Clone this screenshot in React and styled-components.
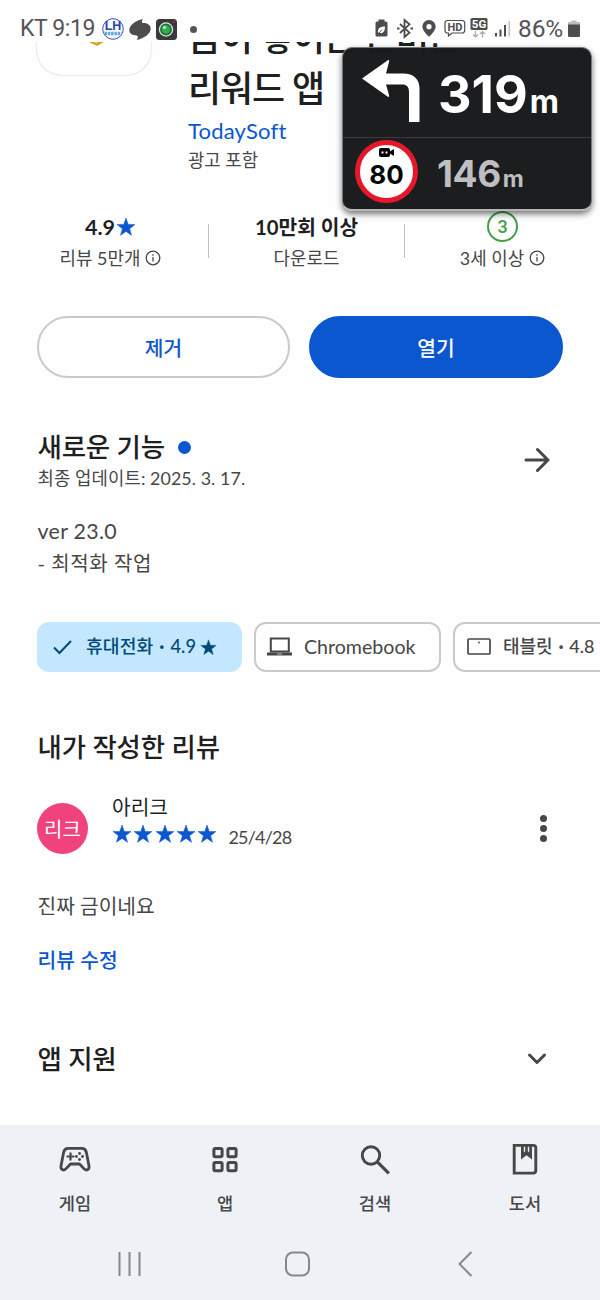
import React from "react"
import styled, { createGlobalStyle } from "styled-components"

const ink = "#1f1f1f"
const grey = "#474747"
const blue = "#0b57cf"

const GlobalStyle = createGlobalStyle`
  * {
    box-sizing: border-box;
  }

  body {
    margin: 0;
    background: #fefefe;
    font-family: Lato, "Noto Sans CJK KR", sans-serif;
    color: ${grey};
  }

  svg {
    display: block;
    flex-shrink: 0;
  }
`

const Screen = styled.div`
  position: relative;
  width: 600px;
  height: 1300px;
  display: flex;
  flex-direction: column;
  overflow: hidden;
  background: #fefefe;
`

const Text = styled.span`
  display: block;
  white-space: nowrap;
  font-size: ${({ $size }) => $size}px;
  line-height: ${({ $line = 30 }) => $line}px;
  font-weight: ${({ $weight = 400 }) => $weight};
  letter-spacing: ${({ $spacing = 0 }) => $spacing}px;
  color: ${({ $color = grey }) => $color};
`

// Status bar

const StatusBar = styled.header`
  flex: none;
  height: 42px;
  padding: 16px 20px 0 20px;
  display: flex;
  justify-content: space-between;
  font-family: Roboto, sans-serif;
`

const StatusGroup = styled.div`
  height: 26px;
  display: flex;
  align-items: center;
  gap: ${({ $gap }) => $gap}px;
`

const LhBadge = () => (
  <svg width="22" height="22" viewBox="0 0 22 22">
    <circle cx="11" cy="11" r="10.3" fill="#f8fbff" stroke="#3a58ad" />
    <text
      x="11"
      y="12"
      textAnchor="middle"
      fontFamily="Liberation Sans"
      fontSize="12.5"
      fontWeight="700"
      fill="#27449c"
    >
      LH
    </text>
    <path d="M2.500 15.500h17" stroke="#65a5dc" strokeWidth="3.500" strokeDasharray="2.500 .8" />
  </svg>
)

const Swirl = () => (
  <svg width="22" height="21" viewBox="0 0 22 21">
    <path
      d="M14 0C12.500 1.800 12.500 3.500 14 4c4.500 0 7.700 2 7.700 5.500 0 5-5.700 9.500-14 11.500 1.500-1.800 1.500-4 0-4.500C3.300 16.500.3 14.500.3 11.300.3 6.300 6 1.800 14 0z"
      fill="#4d4d4f"
    />
  </svg>
)

const Camera = () => (
  <svg width="21" height="21" viewBox="0 0 21 21">
    <rect width="21" height="21" rx="3.500" fill="#37393a" />
    <circle cx="10" cy="10.500" r="7.200" fill="#e3e6e3" />
    <circle cx="10" cy="10.500" r="5.900" fill="#176c35" />
    <circle cx="10" cy="10.500" r="4.400" fill="#35a94e" />
    <circle cx="8.500" cy="8.500" r="1.700" fill="#a6ebaa" />
    <circle cx="18" cy="3" r="1.200" fill="#ad2732" />
  </svg>
)

const Dot = styled.i`
  width: ${({ $size }) => $size}px;
  height: ${({ $size }) => $size}px;
  margin-left: ${({ $left = 0 }) => $left}px;
  border-radius: 50%;
  background: ${({ $color }) => $color};
`

const StatusIcons = () => (
  <svg width="136" height="24" viewBox="0 0 136 24">
    <g fill="#4d4d4f">
      <path d="M3.500 2.500h6v2H11a1.500 1.500 0 0 1 1.500 1.500v12a1.500 1.500 0 0 1-1.500 1.500H2A1.500 1.500 0 0 1 .500 18V6A1.500 1.500 0 0 1 2 4.500h1.500z" />
      <path d="M54 3a6.700 6.700 0 0 1 6.700 6.700c0 4-6.700 10-6.700 10s-6.700-6-6.700-10A6.700 6.700 0 0 1 54 3z" />
      <rect x="95.500" y="1" width="17" height="12" rx="1.500" />
      <rect x="120" y="16" width="2" height="3.500" />
      <rect x="124.500" y="12.500" width="2" height="7" />
      <rect x="129" y="8" width="2" height="11.500" />
    </g>
    <path d="M3 15.500c-.5-4 2-6 7-6 0 5-2 7.500-6 6.200z" fill="#fff" />
    <path d="M2.800 17.300L7 12.800" stroke="#4d4d4f" strokeWidth=".9" />
    <circle cx="54" cy="9.700" r="2.600" fill="#fefefe" />
    <path
      d="M25 7l9.500 8.700-5 4.300V3l5 4.300L25 16M22 11.500h2.500M35.500 11.500h2.500"
      fill="none"
      stroke="#4d4d4f"
      strokeWidth="1.800"
    />
    <path
      d="M72.500 3.500h14.700a2.500 2.500 0 0 1 2.500 2.500v7.500a2.500 2.500 0 0 1-2.500 2.500H77l-3.500 3v-3h-1a2.500 2.500 0 0 1-2.500-2.500V6a2.500 2.500 0 0 1 2.500-2.500z"
      fill="none"
      stroke="#4d4d4f"
      strokeWidth="1.200"
    />
    <g fontFamily="Roboto" fontWeight="700" textAnchor="middle">
      <text x="80" y="13.700" fontSize="11" fill="#4d4d4f">
        HD
      </text>
      <text x="104" y="11" fontSize="11.500" fill="#fff">
        5G
      </text>
    </g>
    <path
      d="M100.500 14v6m-2.500-2.500l2.500 2.500 2.500-2.500M107.500 20.500v-6m-2.500 2.500l2.500-2.500 2.500 2.500"
      fill="none"
      stroke="#a7a7a8"
      strokeWidth="1.200"
    />
    <rect x="133.500" y="4" width="1.600" height="15.500" fill="#c0c0c0" />
  </svg>
)

const Battery = () => (
  <svg width="12" height="18" viewBox="0 0 12 18">
    <path d="M3.500.500h5V2H12v4H0V2h3.500z" fill="#bdbdbe" />
    <path d="M0 4.500h12v11a1.500 1.500 0 0 1-1.500 1.500h-9A1.500 1.500 0 0 1 0 15.500z" fill="#4d4d4f" />
  </svg>
)

// App header

const Content = styled.main`
  flex: 1;
  min-height: 0;
  overflow: hidden;
`

const AppHeader = styled.section`
  display: flex;
  gap: 37px;
  height: 248px;
  margin-top: -81px;
  padding-left: 37px;
`

const AppIcon = styled.div`
  width: 114px;
  height: 114px;
  display: flex;
  align-items: flex-end;
  justify-content: center;
  padding: 0 0 26px 4px;
  border-radius: 25px;
  background: #fff;
  box-shadow: 0 0 2px #bbb;
`

const AppInfo = styled.div`
  padding-top: 51px;
`

const Title = styled.h1`
  margin: 0 0 4px;
  font-size: 36px;
  line-height: 50.5px;
  font-weight: 500;
  letter-spacing: -1.1px;
  color: ${ink};
  white-space: nowrap;
`

// Stats

const Stats = styled.section`
  display: grid;
  grid-template-columns: repeat(3, 196px);
  height: 107px;
  padding: 2px 0 0 13px;
`

const Stat = styled.div`
  display: flex;
  flex-direction: column;
  align-items: center;
`

const StatRow = styled.div`
  display: flex;
  align-items: center;
  gap: ${({ $gap = 1 }) => $gap}px;
  height: 31px;
`

const StatCell = styled.div`
  display: grid;
  grid-template-columns: 1fr 1px;

  &::after {
    content: "";
    height: 34px;
    margin-top: 13px;
    background: ${({ $last }) => ($last ? "transparent" : "#c0c0c0")};
  }
`

const AgeRing = styled.div`
  width: 31px;
  height: 31px;
  display: flex;
  align-items: center;
  justify-content: center;
  border: 2px solid #43a047;
  border-radius: 50%;
  font: 500 18px Roboto, sans-serif;
  color: #43a047;
`

const Star = ({ size = 20, color = blue }) => (
  <svg width={size} height={size} viewBox="0 0 20 20">
    <path
      d="M10 1l2.200 6.400 6.800.100-5.400 4.200 1.950 6.600L10 14.400l-5.550 3.900 1.950-6.600L1 7.500l6.800-.100z"
      fill={color}
      stroke={color}
      strokeWidth=".5"
    />
  </svg>
)

const Info = () => (
  <svg width="16" height="16" viewBox="0 0 16 16" fill="none" stroke={grey} strokeWidth="1.300">
    <circle cx="8" cy="8" r="6.800" />
    <path d="M8 7v4.600M8 4.200v1.500" />
  </svg>
)

const Actions = styled.section`
  display: grid;
  grid-template-columns: 253px 254px;
  gap: 19px;
  height: 62px;
  padding-left: 37px;
`

const Button = styled.button`
  height: 62px;
  padding: 0;
  border: 2px solid ${({ $primary }) => ($primary ? blue : "#cacaca")};
  border-radius: 31px;
  background: ${({ $primary }) => ($primary ? blue : "transparent")};
  color: ${({ $primary }) => ($primary ? "#fff" : blue)};
  font: 500 20.3px Lato, "Noto Sans CJK KR", sans-serif;
`

// What's new

const Section = styled.section`
  display: flex;
  justify-content: space-between;
  height: ${({ $height }) => $height}px;
  padding: ${({ $top }) => $top}px 38px 0 37.5px;
`

const HeadingRow = styled.div`
  display: flex;
  align-items: center;
  gap: 13px;
`

const Notes = styled.div`
  margin-top: 22px;
`

const IconSlot = styled.div`
  display: flex;
  align-items: center;
  height: ${({ $height }) => $height}px;
  padding-right: ${({ $right = 0 }) => $right}px;
`

// Device chips

const Chips = styled.section`
  display: flex;
  gap: 12px;
  height: 102px;
  padding-left: 37px;
`

const Chip = styled.div`
  flex: none;
  display: flex;
  align-items: center;
  gap: 12px;
  width: ${({ $width }) => $width}px;
  height: 50px;
  padding-left: ${({ $left = 11 }) => $left}px;
  border: 2px solid ${({ $active }) => ($active ? "#c2e7ff" : "#cacaca")};
  border-radius: 12px;
  background: ${({ $active }) => ($active ? "#c2e7ff" : "transparent")};
`

const Bullet = styled.span`
  margin: 0 1px;
  font-family: Roboto, sans-serif;
  font-size: 16px;
`

// Review

const Review = styled.section`
  display: flex;
  height: 98px;
  padding: 18px 0 0 37px;
`

const Avatar = styled.div`
  width: 51px;
  height: 51px;
  margin-top: 11px;
  display: flex;
  align-items: center;
  justify-content: center;
  border-radius: 50%;
  background: #f0427c;
`

const ReviewMeta = styled.div`
  flex: 1;
  padding-left: 24px;
`

const Rating = styled.div`
  display: flex;
  align-items: center;
  gap: 1.3px;
  height: 24px;

  & > span {
    margin: 6px 0 0 10px;
  }
`

const Kebab = styled.div`
  display: flex;
  flex-direction: column;
  gap: 3px;
  padding: 23px 53px 0 0;
`

const ReviewBody = styled.section`
  height: 136px;
  padding: 2px 0 0 37.5px;
`

// Bottom navigation

const BottomBar = styled.footer`
  flex: none;
  height: 175px;
  background: #eef1f6;
`

const Tabs = styled.nav`
  display: grid;
  grid-template-columns: repeat(4, 150px);
  height: 114px;
  padding-top: 17px;
`

const Tab = styled.div`
  display: flex;
  flex-direction: column;
  align-items: center;
  gap: 10px;
`

const SystemNav = styled.div`
  display: flex;
  gap: 143px;
  padding: 12px 0 0 117px;
`

const GameIcon = () => (
  <svg width="36" height="36" viewBox="0 0 36 36">
    <path
      d="M11 6.300h14c2.500 0 3.800 1.500 4.300 3.800l2.700 14c.6 3.500-2.500 5-4.600 3L22.500 22h-9l-4.900 5.100c-2.100 2-5.200.5-4.600-3l2.700-14C7.200 7.800 8.500 6.300 11 6.300z"
      fill="none"
      stroke={grey}
      strokeWidth="2.800"
      strokeLinejoin="round"
    />
    <path d="M13.500 10.500v8M9.500 14.500h8" stroke={grey} strokeWidth="2.200" />
    <g fill={grey}>
      <circle cx="22.500" cy="11.500" r="1.400" />
      <circle cx="22.500" cy="17.500" r="1.400" />
      <circle cx="19.500" cy="14.500" r="1.400" />
      <circle cx="25.500" cy="14.500" r="1.400" />
    </g>
  </svg>
)

const AppsIcon = () => (
  <svg width="36" height="36" viewBox="0 0 36 36" fill="none" stroke={grey} strokeWidth="3">
    <rect x="6.900" y="6.500" width="8.200" height="8.200" rx="1.500" />
    <rect x="20.900" y="6.500" width="8.200" height="8.200" rx="1.500" />
    <rect x="6.900" y="20.500" width="8.200" height="8.200" rx="1.500" />
    <rect x="20.900" y="20.500" width="8.200" height="8.200" rx="1.500" />
  </svg>
)

const SearchIcon = () => (
  <svg width="36" height="36" viewBox="0 0 36 36" fill="none" stroke={grey} strokeWidth="2.900">
    <circle cx="14" cy="13.500" r="8.700" />
    <path d="M20.300 19.800l11.500 11.500" strokeWidth="3.200" />
  </svg>
)

const BookIcon = () => (
  <svg width="36" height="36" viewBox="0 0 36 36">
    <path
      d="M7.200 3.400h19a2.600 2.600 0 0 1 2.600 2.600v22.500a2.600 2.600 0 0 1-2.600 2.600h-19z"
      fill="none"
      stroke={grey}
      strokeWidth="2.900"
    />
    <path d="M14 3h11v14.500l-5.500-4.200-5.500 4.200z" fill={grey} />
    <path d="M16.800 4.800h1.400v4.500l-1.400 1.200zM20.800 4.800h1.400v5.700l-1.400-1.200z" fill="#eef1f6" />
  </svg>
)

const tabs = [
  { label: "게임", Icon: GameIcon },
  { label: "앱", Icon: AppsIcon },
  { label: "검색", Icon: SearchIcon },
  { label: "도서", Icon: BookIcon },
]

// Floating driving guidance

const Guidance = styled.aside`
  position: absolute;
  top: 47px;
  left: 342px;
  width: 250px;
  height: 164px;
  border-radius: 10px;
  border: 1px solid #77797b;
  border-bottom: 2px solid #b7b7b8;
  background: rgba(24, 25, 27, 0.985);
  box-shadow: 0 3px 6px rgba(0, 0, 0, 0.55);
`

const GuidanceRow = styled.div`
  display: flex;
  align-items: center;
  height: ${({ $height }) => $height}px;
  padding-left: ${({ $left }) => $left}px;
  gap: ${({ $gap }) => $gap}px;

  & + & {
    border-top: 1px solid #3a3b3d;
  }
`

const TurnArrow = styled.svg`
  margin-bottom: 3px;
`

const Distance = styled.div`
  display: flex;
  align-items: baseline;
  margin-top: ${({ $top = 0 }) => $top}px;
  font-family: Inter, sans-serif;
  font-weight: 700;
  font-size: ${({ $size }) => $size}px;
  line-height: 1;
  letter-spacing: ${({ $spacing }) => $spacing}px;
  color: ${({ $color }) => $color};

  small {
    margin-left: 2px;
    font-size: ${({ $unit }) => $unit}px;
    letter-spacing: 0;
  }
`

const SpeedSign = styled.div`
  width: 63px;
  height: 63px;
  display: flex;
  flex-direction: column;
  align-items: center;
  margin-bottom: 5px;
  padding-top: 3px;
  border: 5px solid #e5172b;
  border-radius: 50%;
  background: #fff;
  color: #050505;
  font: 700 26px/33px Inter, sans-serif;
`

const App = () => (
  <>
    <GlobalStyle />
    <Screen>
      <StatusBar>
        <StatusGroup $gap={7}>
          <Text $size={23} $color="#555557" $spacing={-0.4}>
            KT 9:19
          </Text>
          <StatusGroup $gap={5}>
            <LhBadge />
            <Swirl />
            <Camera />
          </StatusGroup>
          <Dot $size={7} $left={6} $color="#555557" />
        </StatusGroup>
        <StatusGroup $gap={5}>
          <StatusGroup $gap={7}>
            <StatusIcons />
            <Text $size={24.5} $color="#555557" $spacing={-0.2}>
              86%
            </Text>
          </StatusGroup>
          <Battery />
        </StatusGroup>
      </StatusBar>

      <Content>
        <AppHeader>
          <AppIcon>
            <svg width="24" height="24" viewBox="0 0 24 24">
              <path d="M1 15h22l-10 6z" fill="#dba11f" />
              <path d="M9 15h5l-1.500 4z" fill="#ffe27c" />
            </svg>
          </AppIcon>
          <AppInfo>
            <Title>
              금이 쌓이는 돈버는
              <br />
              리워드 앱
            </Title>
            <Text $size={22} $line={28} $spacing={0.2} $color={blue}>
              TodaySoft
            </Text>
            <Text $size={17.8} $line={30}>
              광고 포함
            </Text>
          </AppInfo>
        </AppHeader>

        <Stats>
          <StatCell>
            <Stat>
              <StatRow>
                <Text $size={21.5} $weight={700} $color={ink}>
                  4.9
                </Text>
                <Star />
              </StatRow>
              <StatRow $gap={5}>
                <Text $size={17.9}>리뷰 5만개</Text>
                <Info />
              </StatRow>
            </Stat>
          </StatCell>
          <StatCell>
            <Stat>
              <StatRow>
                <Text $size={20.3} $weight={700} $color={ink}>
                  10만회 이상
                </Text>
              </StatRow>
              <StatRow>
                <Text $size={17.9}>다운로드</Text>
              </StatRow>
            </Stat>
          </StatCell>
          <StatCell $last>
            <Stat>
              <AgeRing>3</AgeRing>
              <StatRow $gap={5}>
                <Text $size={17.9}>3세 이상</Text>
                <Info />
              </StatRow>
            </Stat>
          </StatCell>
        </Stats>

        <Actions>
          <Button>제거</Button>
          <Button $primary>열기</Button>
        </Actions>

        <Section $height={244} $top={52}>
          <div>
            <HeadingRow>
              <Text $size={26.5} $line={34} $weight={500} $spacing={-0.2} $color={ink}>
                새로운 기능
              </Text>
              <Dot $size={13} $color={blue} />
            </HeadingRow>
            <Text $size={17.8} $line={28} $spacing={0.1}>
              최종 업데이트: 2025. 3. 17.
            </Text>
            <Notes>
              <Text $size={21.4} $line={34} $spacing={0.3}>
                ver 23.0
              </Text>
              <Text $size={20} $line={31} $spacing={0.6}>
                - 최적화 작업
              </Text>
            </Notes>
          </div>
          <IconSlot $height={59} $right={12}>
            <svg
              width="26"
              height="26"
              viewBox="0 0 26 26"
              fill="none"
              stroke={grey}
              strokeWidth="3"
              strokeLinecap="round"
              strokeLinejoin="round"
            >
              <path d="M2 13h22M13.500 2.500L24 13 13.500 23.500" />
            </svg>
          </IconSlot>
        </Section>

        <Chips>
          <Chip $width={205} $left={13} $active>
            <svg width="22" height="20" viewBox="0 0 22 20" fill="none" stroke="#004a77" strokeWidth="2">
              <path d="M2 10.500l5.500 5.500L19 4" />
            </svg>
            <StatusGroup $gap={4}>
              <Text $size={18.2} $weight={500} $spacing={0.1} $color="#004a77">
                휴대전화 <Bullet>•</Bullet> 4.9
              </Text>
              <Star size={17} color="#004a77" />
            </StatusGroup>
          </Chip>
          <Chip $width={187} $left={11}>
            <svg width="25" height="20" viewBox="0 0 25 20">
              <rect x="3.800" y="1.500" width="18" height="13" fill="none" stroke={grey} strokeWidth="2" />
              <path d="M0 15.500h25v3H0z" fill={grey} />
              <path d="M10 17h5" stroke="#bbb" />
            </svg>
            <Text $size={19.6}>Chromebook</Text>
          </Chip>
          <Chip $width={187} $left={12}>
            <svg width="24" height="20" viewBox="0 0 24 20">
              <rect x="1" y="2" width="22" height="15" rx="1" fill="none" stroke={grey} strokeWidth="1.700" />
              <circle cx="12" cy="5.500" r=".9" fill={grey} />
            </svg>
            <Text $size={18} $weight={500}>
              태블릿 <Bullet>•</Bullet> 4.8
            </Text>
          </Chip>
        </Chips>

        <Section $height={50} $top={6}>
          <Text $size={26.4} $line={34} $weight={500} $spacing={-0.1} $color={ink}>
            내가 작성한 리뷰
          </Text>
        </Section>
        <Review>
          <Avatar>
            <Text $size={20} $color="#fff">
              리크
            </Text>
          </Avatar>
          <ReviewMeta>
            <Text $size={20.3} $color={ink}>
              아리크
            </Text>
            <Rating>
              {[1, 2, 3, 4, 5].map(n => (
                <Star key={n} />
              ))}
              <Text $size={18} $line={24} $spacing={-0.8}>
                25/4/28
              </Text>
            </Rating>
          </ReviewMeta>
          <Kebab>
            <Dot $size={7} $color={grey} />
            <Dot $size={7} $color={grey} />
            <Dot $size={7} $color={grey} />
          </Kebab>
        </Review>

        <ReviewBody>
          <Text $size={20.3} $line={64}>
            진짜 금이네요
          </Text>
          <Text $size={20.4} $line={44} $weight={500} $color={blue}>
            리뷰 수정
          </Text>
        </ReviewBody>

        <Section $height={60} $top={34}>
          <Text $size={26.5} $line={34} $weight={500} $spacing={-0.2} $color={ink}>
            앱 지원
          </Text>
          <IconSlot $height={34} $right={15}>
            <svg
              width="20"
              height="14"
              viewBox="0 0 20 14"
              fill="none"
              stroke={grey}
              strokeWidth="3"
              strokeLinecap="round"
              strokeLinejoin="round"
            >
              <path d="M2.500 3l7.500 7.500L17.500 3" />
            </svg>
          </IconSlot>
        </Section>
      </Content>

      <BottomBar>
        <Tabs>
          {tabs.map(({ label, Icon }) => (
            <Tab key={label}>
              <Icon />
              <Text $size={17.6} $line={31} $weight={500}>
                {label}
              </Text>
            </Tab>
          ))}
        </Tabs>
        <SystemNav>
          <svg width="25" height="26" viewBox="0 0 25 26" stroke="#85888c" strokeWidth="2">
            <path d="M2.500 1v24M12.500 1v24M22.500 1v24" />
          </svg>
          <svg width="25" height="26" viewBox="0 0 25 26" fill="none" stroke="#85888c" strokeWidth="2">
            <rect x="1" y="1.500" width="23" height="23" rx="7" />
          </svg>
          <svg width="25" height="26" viewBox="0 0 25 26" fill="none" stroke="#85888c" strokeWidth="2">
            <path d="M18.500 1L6.500 13l12 12" />
          </svg>
        </SystemNav>
      </BottomBar>

      <Guidance>
        <GuidanceRow $height={89} $left={19} $gap={16}>
          <TurnArrow width="60" height="64" viewBox="0 0 60 64" fill="#fff">
            <path d="M0 19.500L25.500 1.500c1.500-1 2 0 1.500 1.500L24 14.500h17c11 0 16.500 6 16.500 15V63H47V33c0-5-2-7.500-7-7.500H24L27 36c.5 1.500 0 2.500-1.500 1.500z" />
          </TurnArrow>
          <Distance $size={52} $unit={32} $spacing={0} $top={4} $color="#fff">
            319<small>m</small>
          </Distance>
        </GuidanceRow>
        <GuidanceRow $height={72} $left={12} $gap={19}>
          <SpeedSign>
            <svg width="16" height="10" viewBox="0 0 16 10">
              <rect y="0" width="11" height="9" rx="2" />
              <path d="M10 4l5-3v7l-5-3z" />
              <path d="M2.500 4.500h2M6.500 4.500h2" stroke="#fff" strokeWidth="1.800" />
            </svg>
            80
          </SpeedSign>
          <Distance $size={37} $unit={23} $spacing={-0.4} $color="#bfbfc0">
            146<small>m</small>
          </Distance>
        </GuidanceRow>
      </Guidance>
    </Screen>
  </>
)

export default App
